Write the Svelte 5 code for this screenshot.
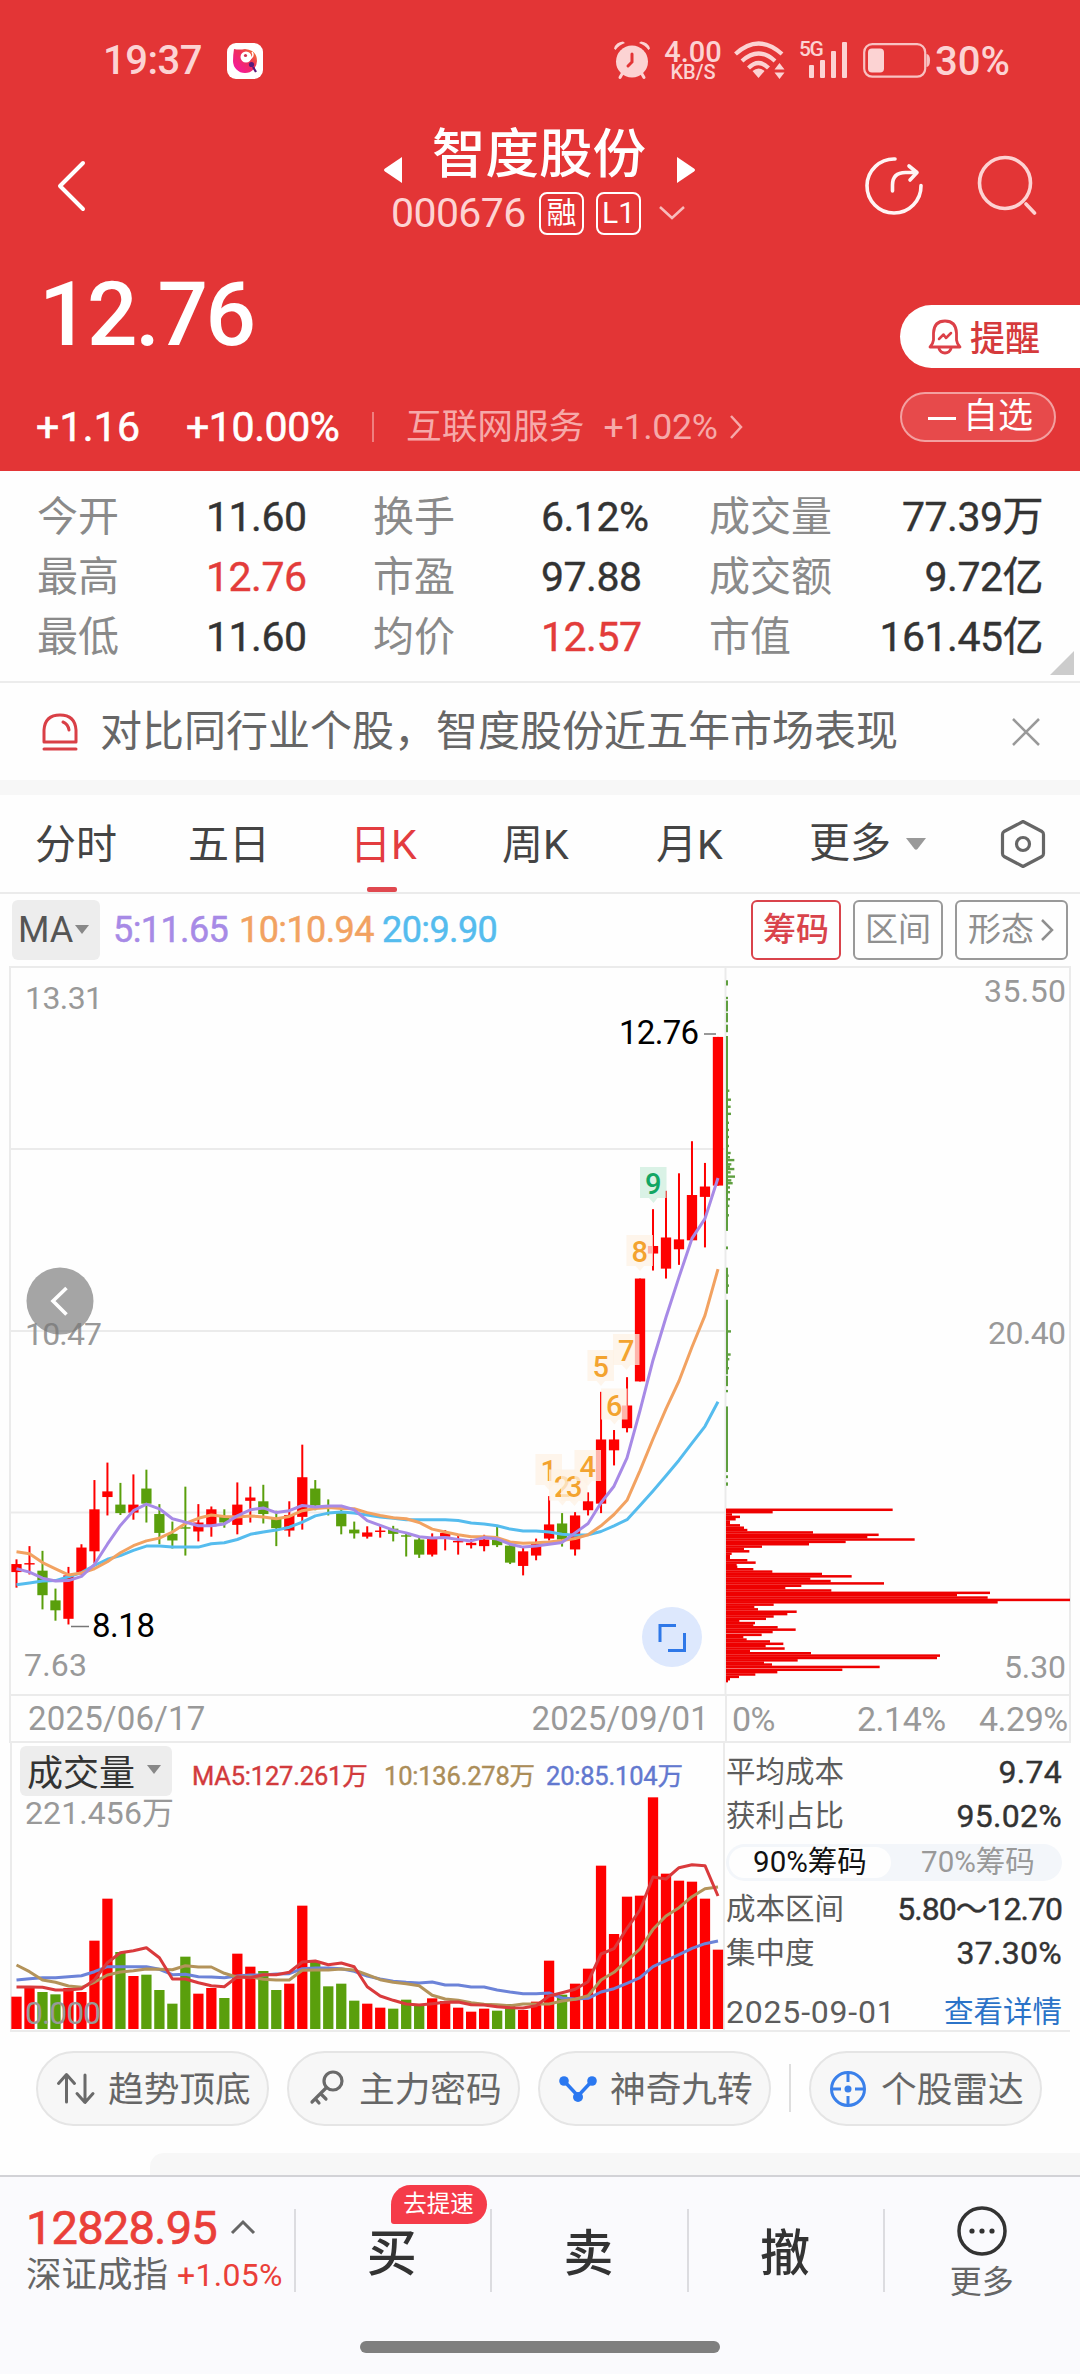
<script>
    const left = 16.5;
    const step = 12.99;
    const barWidth = 10.3;
    const xAt = (i) => left + i * step;
    const ky = (v) => v / 2.119 - 6;
    const vy = (v) => v / 3 - 62;

    // direction, high, body top, body bottom, low
    const candles = [
        ["r", 1270, 1280, 1297, 1330], ["r", 1242, 1278, 1281, 1302], ["g", 1252, 1294, 1346, 1376],
        ["g", 1332, 1357, 1378, 1400], ["r", 1286, 1304, 1396, 1408], ["r", 1238, 1245, 1298, 1303],
        ["r", 1102, 1164, 1253, 1278], ["r", 1065, 1126, 1138, 1177], ["g", 1108, 1154, 1172, 1176],
        ["r", 1090, 1154, 1171, 1186], ["g", 1080, 1120, 1152, 1192], ["g", 1153, 1174, 1214, 1238],
        ["g", 1190, 1216, 1230, 1247], ["g", 1116, 1202, 1205, 1262], ["r", 1153, 1192, 1211, 1232],
        ["r", 1158, 1164, 1200, 1222], ["g", 1164, 1178, 1192, 1203], ["r", 1107, 1154, 1197, 1217],
        ["r", 1116, 1139, 1146, 1192], ["g", 1112, 1147, 1174, 1194], ["g", 1167, 1183, 1204, 1242],
        ["r", 1147, 1176, 1209, 1222], ["r", 1027, 1096, 1180, 1207], ["g", 1102, 1120, 1156, 1166],
        ["g", 1143, 1158, 1161, 1177], ["g", 1164, 1168, 1200, 1217], ["g", 1190, 1207, 1215, 1226],
        ["r", 1200, 1213, 1222, 1226], ["r", 1198, 1209, 1212, 1224], ["g", 1199, 1205, 1216, 1232],
        ["g", 1216, 1219, 1222, 1264], ["g", 1222, 1228, 1260, 1267], ["r", 1215, 1227, 1260, 1264],
        ["r", 1208, 1214, 1222, 1251], ["r", 1220, 1231, 1234, 1260], ["r", 1227, 1235, 1240, 1247],
        ["r", 1218, 1228, 1242, 1253], ["g", 1199, 1228, 1240, 1244], ["g", 1238, 1241, 1277, 1280],
        ["r", 1245, 1253, 1284, 1304], ["r", 1226, 1235, 1262, 1272], ["r", 1136, 1196, 1226, 1230],
        ["g", 1172, 1194, 1228, 1243], ["r", 1170, 1177, 1249, 1262], ["r", 1128, 1147, 1166, 1177],
        ["r", 915, 1016, 1152, 1172], ["r", 996, 1016, 1039, 1071], ["r", 884, 944, 992, 1001],
        ["r", 675, 675, 893, 893], ["r", 528, 606, 622, 658], ["r", 489, 588, 654, 675],
        ["r", 452, 592, 613, 646], ["r", 384, 498, 594, 594], ["r", 430, 480, 502, 609],
        ["r", 163, 163, 478, 478],
    ];
    const priceMa = [
        { color: "#55bcee", v: [1324, 1320, 1316, 1315, 1307, 1298, 1283, 1270, 1262, 1251, 1242, 1242, 1244, 1244, 1244, 1237, 1235, 1228, 1217, 1212, 1208, 1202, 1191, 1178, 1172, 1170, 1172, 1176, 1180, 1183, 1186, 1186, 1186, 1186, 1188, 1193, 1195, 1199, 1206, 1210, 1210, 1212, 1217, 1219, 1218, 1211, 1199, 1186, 1156, 1125, 1093, 1060, 1024, 988, 936] },
        { color: "#f2a261", v: [1254, 1258, 1277, 1290, 1303, 1299, 1290, 1275, 1256, 1241, 1231, 1225, 1212, 1194, 1183, 1176, 1179, 1180, 1178, 1180, 1184, 1179, 1167, 1162, 1160, 1162, 1163, 1171, 1177, 1182, 1184, 1192, 1206, 1212, 1218, 1222, 1222, 1224, 1233, 1236, 1235, 1233, 1230, 1226, 1218, 1199, 1175, 1145, 1082, 1015, 951, 892, 820, 753, 655] },
        { color: "#a78ae6", v: [1290, 1297, 1310, 1316, 1315, 1306, 1281, 1238, 1198, 1167, 1153, 1163, 1184, 1191, 1199, 1199, 1195, 1178, 1165, 1161, 1171, 1167, 1156, 1159, 1157, 1157, 1165, 1188, 1198, 1208, 1214, 1222, 1225, 1224, 1228, 1231, 1224, 1227, 1238, 1244, 1242, 1238, 1234, 1214, 1194, 1150, 1115, 1055, 955, 848, 757, 672, 590, 548, 462] },
    ];
    const volumes = [
        950, 918, 936, 943, 924, 936, 782, 656, 816, 888, 884, 930, 971, 830, 941, 924, 954, 821, 860,
        873, 930, 911, 677, 845, 919, 911, 962, 971, 983, 986, 959, 978, 955, 963, 983, 995, 986, 992,
        972, 990, 965, 842, 944, 911, 866, 557, 762, 650, 647, 352, 581, 602, 605, 656, 809,
    ];
    const volumeMa = [
        { color: "#6c83d8", v: [900, 896, 893, 893, 890, 887, 875, 860, 860, 860, 860, 868, 884, 883, 890, 891, 893, 888, 885, 885, 882, 881, 866, 864, 864, 866, 874, 888, 897, 904, 907, 909, 906, 915, 915, 921, 921, 930, 936, 941, 941, 939, 954, 957, 955, 936, 926, 910, 893, 860, 842, 824, 805, 791, 783] },
        { color: "#b3935a", v: [855, 875, 900, 907, 918, 922, 907, 885, 876, 872, 867, 868, 869, 857, 861, 861, 880, 892, 890, 898, 900, 900, 871, 870, 870, 867, 870, 884, 899, 907, 911, 917, 946, 957, 961, 968, 973, 974, 977, 972, 972, 972, 963, 958, 947, 900, 877, 842, 807, 748, 708, 683, 650, 626, 621] },
        { color: "#d93a3c", v: [921, 921, 922, 930, 930, 926, 900, 848, 818, 812, 803, 833, 897, 897, 908, 917, 920, 890, 893, 884, 884, 877, 846, 843, 854, 849, 860, 920, 948, 961, 972, 975, 971, 967, 966, 974, 975, 980, 983, 984, 977, 948, 938, 928, 905, 822, 806, 745, 690, 591, 597, 563, 554, 557, 648] },
    ];
    const line = (v, fy) => v.map((p, i) => `${xAt(i).toFixed(1)},${fy(p).toFixed(1)}`).join(" ");
    const fill = (d) => (d === "r" ? "#fe0000" : "#5a9f0c");

    // chip distribution: level, length
    const redChips = [
        [1165, 548], [1170, 188], [1175, 66], [1180, 90], [1185, 77], [1190, 60], [1194, 60], [1198, 90], [1203, 102],
        [1208, 112], [1213, 309], [1218, 506], [1223, 472], [1228, 614], [1233, 407], [1238, 297],
        [1243, 156], [1248, 102], [1253, 118], [1258, 65], [1263, 60], [1267, 60], [1272, 112], [1277, 137],
        [1282, 80], [1286, 82], [1291, 130], [1296, 187], [1301, 336], [1306, 425], [1311, 301], [1316, 362],
        [1321, 522], [1326, 274], [1331, 226], [1336, 364], [1341, 840], [1346, 741], [1351, 833],
        [1356, 1080], [1361, 863], [1366, 191], [1371, 133], [1376, 144], [1381, 260], [1386, 232],
        [1391, 191], [1396, 168], [1400, 88], [1405, 135], [1410, 130], [1414, 203], [1419, 257],
        [1424, 188], [1430, 155], [1435, 100], [1440, 110], [1444, 180], [1449, 220], [1454, 167],
        [1459, 224], [1464, 120], [1469, 303], [1474, 690], [1479, 681], [1484, 263], [1489, 162],
        [1493, 186], [1498, 509], [1504, 397], [1509, 202], [1514, 136], [1519, 87], [1524, 60], [1528, 54],
    ];
    const greenSpine = [
        [43, 54], [78, 83], [86, 109], [112, 132], [137, 153], [161, 574], [607, 613], [652, 707],
        [720, 878], [881, 903], [911, 916], [946, 1085], [1092, 1098], [1107, 1114],
    ];
    const greenChips = [
        [277, 58], [296, 63], [311, 62], [326, 63], [345, 57], [360, 57], [375, 57], [394, 57],
        [409, 62], [418, 60], [424, 73], [433, 64], [438, 60], [443, 73], [450, 62], [459, 75], [467, 64],
        [473, 68], [482, 60], [492, 60], [507, 60], [521, 58], [541, 57], [669, 56], [690, 57],
        [787, 63], [836, 62], [846, 58], [865, 57],
    ];
    const nineTurns = [
        [1, 535.5, 488], [2, 549, 503.5], [3, 561, 504], [4, 574.5, 484], [5, 587.5, 384],
        [6, 601, 422.5], [7, 613, 368], [8, 626.5, 269], [9, 640, 201],
    ];

    const stats = [
        ["今开", "11.60", "", "换手", "6.12%", "", "成交量", "77.39万"],
        ["最高", "12.76", "up", "市盈", "97.88", "", "成交额", "9.72亿"],
        ["最低", "11.60", "", "均价", "12.57", "up", "市值", "161.45亿"],
    ];
    const tabs = ["分时", "五日", "日K", "周K", "月K"];
    let activeTab = "日K";
    let chipRange = 90;
</script>

<main>
    <header>
        <div class="status">
            <span class="clock">19:37</span>
            <svg class="app" width="36" height="36" viewBox="0 0 36 36">
                <defs>
                    <linearGradient id="bird" x1="0" y1="1" x2="1" y2="0">
                        <stop offset="0" stop-color="#f712b0" /><stop offset=".6" stop-color="#ef3055" /><stop offset="1" stop-color="#f08a2c" />
                    </linearGradient>
                </defs>
                <rect width="36" height="36" rx="9" fill="#fff" />
                <path d="M7 6q5 1 11 0 12 1 12 12a12 12 0 0 1-24 0Q6 12 7 6z" fill="url(#bird)" />
                <circle cx="19" cy="14" r="5.500" fill="#fff" />
                <circle cx="18.500" cy="12.500" r="1.600" fill="#d03050" />
                <path d="M25 9q3 4-3 8" fill="none" stroke="#fff" stroke-width="1.500" />
                <circle cx="24.500" cy="21.500" r="2.600" fill="#55187a" />
                <path d="M26 24l3 5" stroke="#55187a" stroke-width="2.200" />
            </svg>
            <div class="sys">
                <svg class="alarm" width="38" height="40" viewBox="0 0 38 40" fill="none" stroke="#fcd3d3" stroke-linecap="round">
                    <circle cx="19" cy="21.500" r="16" fill="#fcd3d3" stroke="none" />
                    <path d="M1 8.500Q3 2 10 1.500L12 3Q6 5 2.500 10zM37 8.500Q35 2 28 1.500L26 3Q32 5 35.500 10z" fill="#fcd3d3" stroke="none" />
                    <path d="M9 34l-2 3.500M29 34l2 3.500" stroke-width="3" />
                    <path d="M19 14v8l-4 4" stroke="#e33536" stroke-width="3" />
                </svg>
                <div class="speed"><b>4.00</b><i>KB/S</i></div>
                <svg class="wifi" width="51" height="38" viewBox="0 0 51 38" fill="none" stroke="#fcd3d3" stroke-width="4.200">
                    <path d="M1.500 13Q24.500 -8 48 13M8 20Q24.500 5 41 20M14.500 27Q24.500 17 34.500 27" />
                    <path d="M18.500 30Q24.500 25 30.500 30L24.500 37z" fill="#fcd3d3" stroke="none" />
                    <path d="M45.500 22l5 6.500h-10zM45.500 38l5-6.500h-10z" fill="#fcd3d3" stroke="none" />
                </svg>
                <div class="signal">
                    <b>5G</b>
                    <svg width="40" height="38" viewBox="0 0 40 38" fill="#fcd3d3">
                        <rect x="0" y="24" width="5" height="13" rx="1" /><rect x="11" y="19" width="5" height="18" rx="1" />
                        <rect x="22" y="10" width="5" height="27" rx="1" /><rect x="33" y="1" width="5" height="36" rx="1" />
                    </svg>
                </div>
                <svg class="battery" width="67" height="35" viewBox="0 0 67 35">
                    <rect x="1.200" y="1.200" width="61" height="32.500" rx="8" fill="none" stroke="#f8c2c2" stroke-width="2.200" />
                    <rect x="5" y="5.500" width="16" height="24" rx="4" fill="#fcd3d3" />
                    <path d="M63.500 11q3.500 0 3.500 6.500t-3.500 6.500z" fill="#f8c2c2" />
                </svg>
                <span class="percent">30%</span>
            </div>
        </div>

        <nav>
            <svg class="back" width="32" height="52" viewBox="0 0 32 52" fill="none" stroke="#fff" stroke-width="4" stroke-linecap="round" stroke-linejoin="round"><path d="M28 3L5 26l23 23" /></svg>
            <div class="title">
                <div class="name">
                    <svg width="20" height="28" viewBox="0 0 20 28"><path d="M19 1v26L2 15.500Q0 14 2 12.500z" fill="#fff" /></svg>
                    <h1>智度股份</h1>
                    <svg width="20" height="28" viewBox="0 0 20 28"><path d="M1 1v26l17-11.500q2-1.500 0-3z" fill="#fff" /></svg>
                </div>
                <div class="code">
                    <span>000676</span>
                    <em class="zh">融</em>
                    <em>L1</em>
                    <svg width="28" height="16" viewBox="0 0 28 16" fill="none" stroke="#f8bcbc" stroke-width="2.500"><path d="M2 2l12 11L26 2" /></svg>
                </div>
            </div>
            <svg class="share" width="64" height="64" viewBox="0 0 64 64" fill="none" stroke="#fff4f4" stroke-width="3.600" stroke-linecap="round" stroke-linejoin="round">
                <path d="M33 5A27 27 0 1 0 59 31.500" />
                <path d="M30.500 37v-6q0-12.500 13-12.500h11M47 12l8 6.500-7 7.500" />
            </svg>
            <svg class="search" width="62" height="62" viewBox="0 0 62 62" fill="none" stroke="#fdd2d2" stroke-width="3.600" stroke-linecap="round">
                <circle cx="30" cy="28" r="25.500" /><path d="M51 49l8.500 9" />
            </svg>
        </nav>

        <div class="quote">
            <div class="quote-left">
                <div class="price">12.76</div>
                <div class="change">
                    <span class="diff">+1.16</span>
                    <span class="rate">+10.00%</span>
                    <span class="bar"></span>
                    <span class="industry">互联网服务</span>
                    <span class="ind-rate">+1.02%</span>
                    <svg width="16" height="26" viewBox="0 0 16 26" fill="none" stroke="#f6a9a9" stroke-width="2.500"><path d="M3 2l10 11L3 24" /></svg>
                </div>
            </div>
            <div class="quote-right">
                <button class="remind">
                    <svg width="34" height="36" viewBox="0 0 34 36" fill="none" stroke="#dc4048" stroke-width="2.800" stroke-linecap="round" stroke-linejoin="round">
                        <path d="M5.500 21V14Q6 2 17 2t11.500 12v7q.5 4 3.500 7H2q3-3 3.500-7z" /><path d="M11 29.500q1.500 4.500 6 4.500t6-4.500" />
                        <path d="M11 20l4.500-4.500 2.500 3.500 5-5" stroke-width="2.500" />
                    </svg>
                    提醒
                </button>
                <button class="fav"><i></i>自选</button>
            </div>
        </div>
    </header>

    <section class="stats">
        {#each stats as s}
            <div class="stat-row">
                <span class="label">{s[0]}</span><span class="val {s[2]}">{s[1]}</span>
                <span class="label">{s[3]}</span><span class="val {s[5]}">{s[4]}</span>
                <span class="label">{s[6]}</span><span class="val end">{s[7]}</span>
            </div>
        {/each}
        <svg class="corner" width="24" height="24" viewBox="0 0 24 24"><path d="M24 0v24H0z" fill="#ccc" /></svg>
    </section>

    <section class="notice">
        <svg width="36" height="38" viewBox="0 0 36 38" fill="none" stroke="#d93f46" stroke-width="3" stroke-linecap="round">
            <path d="M2 29V17Q3 2 18 2t16 15v12zM2 36h32" stroke-linejoin="round" /><path d="M21 9q5 2 6 8" />
        </svg>
        <p>对比同行业个股，智度股份近五年市场表现</p>
        <svg width="28" height="28" viewBox="0 0 28 28" stroke="#999" stroke-width="2.500"><path d="M1 1l26 26M27 1L1 27" /></svg>
    </section>

    <div class="tabs">
        {#each tabs as t}
            <button class="tab" class:active={t === activeTab} on:click={() => (activeTab = t)}>{t}</button>
        {/each}
        <button class="tab more">更多<svg width="22" height="14" viewBox="0 0 22 14"><path d="M1 1h20L12.500 12q-1.500 1.500-3 0z" fill="#999" /></svg></button>
        <svg class="gear" width="46" height="50" viewBox="0 0 46 50" fill="none" stroke="#666" stroke-width="3.200" stroke-linejoin="round">
            <path d="M23 2.500L42 12.500Q43.500 13.500 43.500 15.500V34.500Q43.500 36.500 42 37.500L23 47.500 4 37.500Q2.500 36.500 2.500 34.500V15.500Q2.500 13.500 4 12.500z" />
            <circle cx="23" cy="25" r="6.500" />
        </svg>
    </div>

    <div class="ma">
        <button class="ma-pick">MA<svg width="14" height="10" viewBox="0 0 14 10"><path d="M0 0h14L7 9z" fill="#888" /></svg></button>
        <span class="m5">5:11.65</span>
        <span class="m10">10:10.94</span>
        <span class="m20">20:9.90</span>
        <div class="tools">
            <button class="on">筹码</button>
            <button>区间</button>
            <button class="shape">形态<svg width="15" height="24" viewBox="0 0 15 24" fill="none" stroke="#8f8f8f" stroke-width="2.500"><path d="M2 2l10 10L2 22" /></svg></button>
        </div>
    </div>

    <svg class="kline" width="1080" height="728" viewBox="0 0 1080 728">
        <g stroke="#ebebeb" stroke-width="2" fill="none">
            <path d="M10 1H1070V728M10 0V728M725.500 0V728" />
            <path d="M10 183H725M10 365H725M10 546.500H725" />
        </g>
        <g class="axis">
            <text x="25" y="42.500" textLength="78">13.31</text>
            <text x="25" y="379" textLength="77">10.47</text>
            <text x="24" y="710" textLength="63">7.63</text>
            <text x="984" y="36" textLength="82">35.50</text>
            <text x="988" y="378" textLength="78">20.40</text>
            <text x="1004" y="712" textLength="62">5.30</text>
        </g>
        {#each candles as c, i}
            <rect x={xAt(i) - 1} y={ky(c[1])} width="2" height={ky(c[4]) - ky(c[1])} fill={fill(c[0])} />
            <rect x={xAt(i) - barWidth / 2} y={ky(c[2])} width={barWidth} height={ky(c[3]) - ky(c[2])} fill={fill(c[0])} />
        {/each}
        {#each nineTurns as n}
            <g class="turn" class:last={n[0] === 9}>
                <path d="M{n[1]} {n[2]}h26.500v31h-9l-4 5-4.500-5h-9z" />
                <text x={n[1] + 13.2} y={n[2] + 27} text-anchor="middle">{n[0]}</text>
            </g>
        {/each}
        {#each priceMa as m}
            <polyline points={line(m.v, ky)} fill="none" stroke={m.color} stroke-width="3" stroke-linejoin="round" />
        {/each}
        {#each greenSpine as g}
            <rect x="726" y={ky(g[0])} width="2" height={ky(g[1]) - ky(g[0])} fill="#5f9f3f" />
        {/each}
        {#each greenChips as g}
            <rect x="726" y={ky(g[0]) - 1.2} width={(g[1] - 48) / 3} height="2.400" fill="#5f9f3f" />
        {/each}
        {#each redChips as r}
            <rect x="726" y={ky(r[0]) - 1.25} width={(r[1] - 48) / 3} height="2.500" fill="#ee0000" />
        {/each}
        <path d="M704 68h12M71 660.500h18" stroke="#777" stroke-width="1.500" />
        <g class="mark">
            <text x="619" y="78" textLength="80">12.76</text>
            <text x="92" y="671" textLength="63">8.18</text>
        </g>
        <circle cx="60" cy="335" r="33.500" fill="#777" fill-opacity=".66" />
        <path d="M66.500 322L53 335l13.500 13.500" fill="none" stroke="#fff" stroke-width="3.600" />
        <circle cx="672" cy="671" r="30" fill="#dde8fd" />
        <path d="M660 676V659.500H676M668 684.500H684.500V667" fill="none" stroke="#2f78e8" stroke-width="3" />
    </svg>

    <div class="dates">
        <div class="days"><span>2025/06/17</span><span>2025/09/01</span></div>
        <div class="ratios"><span>0%</span><span>2.14%</span><span>4.29%</span></div>
    </div>

    <div class="lower">
        <div class="volume">
            <div class="vol-head">
                <button>成交量<svg width="14" height="9" viewBox="0 0 14 9"><path d="M0 0h14L7 9z" fill="#888" /></svg></button>
                <span class="v5">MA5:127.261万</span>
                <span class="v10">10:136.278万</span>
                <span class="v20">20:85.104万</span>
            </div>
            <svg class="vol" width="715" height="290" viewBox="10 0 715 290">
                {#each volumes as v, i}
                    <rect x={xAt(i) - barWidth / 2} y={vy(v)} width={barWidth} height={287 - vy(v)} fill={fill(candles[i][0])} />
                {/each}
                {#each volumeMa as m}
                    <polyline points={line(m.v, vy)} fill="none" stroke={m.color} stroke-width="3" stroke-linejoin="round" />
                {/each}
                <g class="axis">
                    <text x="25" y="82" textLength="149">221.456万</text>
                    <text x="25" y="282" textLength="76">0.000</text>
                </g>
            </svg>
        </div>
        <div class="chips">
            <div class="chip-row"><span>平均成本</span><b>9.74</b></div>
            <div class="chip-row"><span>获利占比</span><b>95.02%</b></div>
            <div class="toggle">
                <button class:sel={chipRange === 90} on:click={() => (chipRange = 90)}>90%筹码</button>
                <button class:sel={chipRange === 70} on:click={() => (chipRange = 70)}>70%筹码</button>
            </div>
            <div class="chip-row"><span>成本区间</span><b class="range">5.80～12.70</b></div>
            <div class="chip-row"><span>集中度</span><b>37.30%</b></div>
            <div class="chip-row foot"><span>2025-09-01</span><a href="#detail">查看详情</a></div>
        </div>
    </div>

    <div class="pills">
        <button>
            <svg width="40" height="38" viewBox="0 0 40 38" fill="none" stroke="#6a6a6a" stroke-width="3" stroke-linecap="round" stroke-linejoin="round"><path d="M10.500 32V5M2.500 13.500l8-9 8 9M29 5v27M37 23.500l-8 9-8-9" /></svg>
            趋势顶底
        </button>
        <button>
            <svg width="40" height="38" viewBox="0 0 40 38" fill="none" stroke="#6a6a6a" stroke-width="3.200" stroke-linecap="round"><circle cx="26" cy="11" r="9" /><path d="M19.500 17.500L5 32M14 24l5 5M8.500 29l3.500 4" /></svg>
            主力密码
        </button>
        <button>
            <svg width="40" height="38" viewBox="0 0 40 38" fill="#2b78f0"><path d="M6 11L20 26 34 11" fill="none" stroke="#2b78f0" stroke-width="3.500" /><circle cx="6" cy="11" r="4.800" /><circle cx="34" cy="11" r="4.800" /><circle cx="20" cy="27" r="5" /></svg>
            神奇九转
        </button>
        <span class="sep"></span>
        <button>
            <svg width="40" height="38" viewBox="0 0 40 38" fill="none" stroke="#3a80ea" stroke-width="3"><circle cx="19" cy="19" r="16.500" /><path d="M19 2v10M19 26v10M2 19h10M26 19h10" /><circle cx="19" cy="19" r="3.500" fill="#3a80ea" stroke="none" /></svg>
            个股雷达
        </button>
    </div>
    <div class="sheet"></div>

    <footer>
        <div class="actions">
            <div class="index">
                <div class="point">12828.95<svg width="26" height="16" viewBox="0 0 26 16" fill="none" stroke="#666" stroke-width="3"><path d="M2 14L13 3l11 11" /></svg></div>
                <div class="idx-name">深证成指<b>+1.05%</b></div>
            </div>
            <button class="act">买<span class="tip">去提速</span></button>
            <button class="act">卖</button>
            <button class="act">撤</button>
            <button class="act menu">
                <svg width="52" height="52" viewBox="0 0 52 52"><circle cx="26" cy="26" r="23" fill="none" stroke="#333" stroke-width="3.500" /><circle cx="16" cy="26" r="2.600" fill="#333" /><circle cx="26" cy="26" r="2.600" fill="#333" /><circle cx="36" cy="26" r="2.600" fill="#333" /></svg>
                更多
            </button>
        </div>
        <div class="home"></div>
    </footer>
</main>

<style>
    :global(body) {
        background: #fefefe;
    }
    main {
        width: 1080px;
        height: 2374px;
        display: flex;
        flex-direction: column;
        overflow: hidden;
        font-family: Roboto, "Noto Sans CJK SC", sans-serif;
        color: #333;
    }
    main > * {
        flex: none;
        box-sizing: border-box;
    }
    button {
        font: inherit;
        color: inherit;
        background: none;
        border: 0;
        padding: 0;
        margin: 0;
    }
    svg {
        display: block;
        flex: none;
    }
    b, i, em {
        font-weight: inherit;
        font-style: normal;
    }
    span, b {
        white-space: nowrap;
    }

    /* header */
    header {
        height: 471px;
        background: #e33536;
        color: #fff;
    }
    .status {
        height: 120px;
        display: flex;
        align-items: center;
        padding-left: 103px;
        color: #fcd3d3;
    }
    .clock {
        width: 124px;
        font-size: 40px;
        font-weight: 500;
        letter-spacing: -0.5px;
    }
    .app {
        margin-top: 2px;
    }
    .sys {
        display: flex;
        align-items: center;
        margin-left: 350px;
    }
    .speed {
        width: 60px;
        margin: 0 11px 0 12px;
        display: flex;
        flex-direction: column;
        align-items: center;
        font-weight: 500;
    }
    .speed b {
        font-size: 29px;
        line-height: 23px;
    }
    .speed i {
        font-size: 20px;
        line-height: 16px;
    }
    .signal {
        position: relative;
        margin: 0 14px 0 24px;
    }
    .signal b {
        position: absolute;
        left: -10px;
        top: -2px;
        font-size: 21px;
        line-height: 20px;
        font-weight: 500;
        letter-spacing: -1.500px;
    }
    .percent {
        margin: 2px 0 0 5px;
        font-size: 40px;
        font-weight: 500;
    }
    nav {
        height: 130px;
        display: flex;
        align-items: flex-start;
    }
    .back {
        margin: 40px 0 0 55px;
    }
    .title {
        width: 320px;
        margin-left: 293px;
    }
    .name {
        display: flex;
        align-items: center;
        margin: 2px 0 4px 3px;
    }
    h1 {
        margin: 0 30px 0 29px;
        width: 214px;
        font-size: 53.500px;
        line-height: 66px;
        font-weight: 500;
        white-space: nowrap;
    }
    .name svg {
        margin-top: 30px;
    }
    .code {
        display: flex;
        align-items: center;
        margin-left: 11px;
        height: 42px;
        color: #fdd3d3;
    }
    .code span {
        width: 148px;
        font-size: 41px;
        letter-spacing: -0.6px;
    }
    .code em {
        box-sizing: border-box;
        width: 45px;
        height: 43px;
        margin-right: 12px;
        border: 2.500px solid #fff;
        border-radius: 8px;
        color: #fff;
        font-size: 30px;
        line-height: 37px;
        text-align: center;
    }
    .code em + svg {
        margin-left: 5px;
    }
    .share {
        margin: 34px 0 0 162px;
    }
    .search {
        margin: 35px 0 0 49px;
    }
    .quote {
        display: flex;
        justify-content: space-between;
    }
    .price {
        height: 126px;
        padding-left: 39px;
        font-size: 89px;
        line-height: 129px;
        font-weight: 500;
        letter-spacing: -2.500px;
    }
    .change {
        display: flex;
        align-items: center;
        height: 50px;
        margin-top: 26px;
        padding-left: 36px;
        font-size: 41px;
        line-height: 50px;
        font-weight: 400;
    }
    .diff {
        width: 150px;
        letter-spacing: 0.2px;
    }
    .rate {
        width: 186px;
        letter-spacing: -0.4px;
    }
    .diff, .rate {
        -webkit-text-stroke: 0.6px #fff;
    }
    .bar {
        width: 2px;
        height: 30px;
        margin-right: 32px;
        background: #ef7f7f;
    }
    .industry, .ind-rate {
        color: #f6a9a9;
        font-size: 35.700px;
    }
    .ind-rate {
        width: 125px;
        margin-left: 19px;
        letter-spacing: -0.3px;
    }
    .quote-right {
        width: 180px;
        padding-top: 55px;
    }
    .remind {
        display: flex;
        align-items: center;
        justify-content: flex-start;
        width: 180px;
        height: 63px;
        padding: 0 0 3px 28px;
        gap: 8px;
        background: #fff;
        border-radius: 32px 0 0 32px;
        color: #d53a3c;
        font-size: 35px;
        font-weight: 500;
    }
    .remind svg {
        margin-top: 3px;
    }
    .fav {
        box-sizing: border-box;
        display: flex;
        align-items: center;
        width: 156px;
        height: 50px;
        margin-top: 24px;
        padding-left: 26px;
        border: 2px solid #f3a0a0;
        border-radius: 25px;
        background: #e74a4b;
        font-size: 35px;
        line-height: 46px;
    }
    .fav i {
        width: 28px;
        height: 3px;
        margin: 2px 7px 0 0;
        background: #fff;
    }

    /* stats */
    .stats {
        position: relative;
        height: 212px;
        padding: 16px 37px 0 37px;
        border-bottom: 2px solid #ececec;
        font-size: 41px;
    }
    .stat-row {
        display: grid;
        grid-template-columns: 169px 167px 168px 168px 150px 1fr;
        line-height: 60px;
    }
    .label {
        color: #8a8a8a;
    }
    .val {
        letter-spacing: -0.5px;
        -webkit-text-stroke: 0.4px currentColor;
    }
    .val.end {
        text-align: right;
    }
    .up {
        color: #e33c3a;
    }
    .corner {
        position: absolute;
        right: 6px;
        bottom: 6px;
    }
    .notice {
        height: 112px;
        display: flex;
        align-items: center;
        padding: 0 40px 0 42px;
        border-bottom: 15px solid #f7f7f7;
        color: #666;
    }
    .notice p {
        flex: 1;
        margin: 0 0 0 22px;
        font-size: 42px;
        line-height: 60px;
    }

    /* tabs */
    .tabs {
        height: 99px;
        display: flex;
        align-items: center;
        padding-left: 35px;
        border-bottom: 2px solid #ebebeb;
        color: #444;
        font-size: 41px;
    }
    .tab {
        position: relative;
        width: 153px;
        height: 97px;
        text-align: left;
        line-height: 101px;
    }
    .tab:nth-child(3) {
        width: 161px;
        padding-left: 9px;
        box-sizing: border-box;
    }
    .tab:nth-child(4) {
        width: 154px;
    }
    .active {
        color: #e33c40;
    }
    .active::after {
        content: "";
        position: absolute;
        left: 26px;
        bottom: 0;
        width: 30px;
        height: 5px;
        border-radius: 2px;
        background: #e0484f;
    }
    .more {
        display: flex;
        align-items: center;
        width: 191px;
        gap: 14px;
    }
    .ma {
        height: 72px;
        display: flex;
        align-items: center;
        padding: 0 12px 0 12px;
        font-size: 36px;
        letter-spacing: -0.6px;
    }
    .ma-pick {
        display: flex;
        align-items: center;
        gap: 2px;
        box-sizing: border-box;
        width: 88px;
        height: 60px;
        padding-left: 6px;
        margin-right: 13px;
        border-radius: 6px;
        background: #ededed;
        color: #555;
    }
    .m5 {
        width: 126px;
        color: #a78ae6;
    }
    .m10 {
        width: 143px;
        color: #f2a261;
    }
    .m20 {
        color: #55bcee;
    }
    .m5, .m10, .m20 {
        -webkit-text-stroke: 0.5px currentColor;
    }
    .tools {
        display: flex;
        gap: 12px;
        margin-left: auto;
    }
    .tools button {
        box-sizing: border-box;
        width: 90px;
        height: 60px;
        border: 2px solid #999;
        border-radius: 6px;
        color: #8f8f8f;
        font-size: 33px;
        line-height: 54px;
        letter-spacing: 0;
    }
    .tools .on {
        border-color: #d9434b;
        color: #d9434b;
        font-weight: 500;
    }
    .tools .shape {
        display: flex;
        align-items: center;
        justify-content: center;
        gap: 6px;
        width: 113px;
    }

    /* charts */
    .axis text {
        fill: #999;
        font-size: 32px;
    }
    .mark text {
        fill: #000;
        font-size: 33px;
    }
    .turn path {
        fill: #fdf2e4;
        fill-opacity: 0.75;
    }
    .turn text {
        fill: #f3a32f;
        font-size: 29px;
        font-weight: 500;
    }
    .turn.last path {
        fill: #cdeedd;
    }
    .turn.last text {
        fill: #12a663;
    }
    .dates {
        height: 49px;
        display: flex;
        margin: 0 9px;
        color: #999;
        font-size: 33px;
        line-height: 46px;
        border: 2px solid #ebebeb;
    }
    .days {
        box-sizing: border-box;
        width: 716px;
        display: flex;
        justify-content: space-between;
        padding: 0 16px 0 17px;
        border-right: 2px solid #ebebeb;
        letter-spacing: 0.2px;
    }
    .ratios {
        flex: 1;
        display: flex;
        padding-left: 5px;
        letter-spacing: -0.5px;
        font-size: 34px;
    }
    .ratios span:nth-child(1) {
        width: 125px;
    }
    .ratios span:nth-child(2) {
        width: 122px;
    }
    .lower {
        height: 290px;
        display: flex;
        margin: -1px 10px 0;
        border-bottom: 2px solid #ebebeb;
    }
    .volume {
        box-sizing: border-box;
        position: relative;
        width: 716px;
        border-left: 2px solid #ebebeb;
        border-right: 2px solid #ebebeb;
    }
    .vol {
        position: absolute;
        left: -2px;
        top: 0;
    }
    .vol-head {
        display: flex;
        align-items: center;
        padding: 4px 0 0 8px;
        font-size: 25.500px;
    }
    .vol-head button {
        display: flex;
        align-items: center;
        gap: 12px;
        box-sizing: border-box;
        width: 152px;
        height: 50px;
        margin-right: 20px;
        padding: 0 0 3px 7px;
        border-radius: 6px;
        background: #ededed;
        font-size: 36px;
    }
    .vol-head span {
        margin-top: 5px;
        letter-spacing: -0.2px;
    }
    .v5 {
        width: 192px;
        color: #d23a3c;
    }
    .v10 {
        width: 162px;
        color: #ab8d58;
    }
    .v20 {
        color: #6278cf;
    }
    .v5, .v10, .v20 {
        -webkit-text-stroke: 0.4px currentColor;
    }
    .chips {
        flex: 1;
        padding: 9px 8px 0 1px;
        font-size: 29.500px;
        line-height: 43.500px;
    }
    .chip-row {
        display: flex;
        justify-content: space-between;
        color: #5c5c5c;
    }
    .chip-row b {
        color: #333;
        font-size: 32px;
        letter-spacing: 0.3px;
        -webkit-text-stroke: 0.4px currentColor;
    }
    .chip-row .range {
        letter-spacing: -1px;
    }
    .toggle {
        display: flex;
        height: 37px;
        margin: 6px 0 7px;
        border-radius: 19px;
        background: #f3f6fa;
        color: #999;
    }
    .toggle button {
        width: 162px;
        height: 31px;
        margin: 3px;
        line-height: 31px;
        border-radius: 16px;
    }
    .toggle .sel {
        background: #fefefe;
        color: #111;
    }
    .foot {
        margin-top: 16px;
    }
    .foot span {
        font-size: 32px;
        letter-spacing: 0.8px;
    }
    .foot a {
        color: #2b73c8;
        text-decoration: none;
    }

    /* shortcuts */
    .pills {
        height: 121px;
        display: flex;
        align-items: flex-start;
        padding: 19px 0 0 36px;
    }
    .pills button {
        box-sizing: border-box;
        display: flex;
        flex: none;
        align-items: center;
        width: 233px;
        height: 75px;
        margin-right: 18px;
        padding: 0 0 5px 18px;
        gap: 12px;
        border: 2px solid #e5e5e5;
        border-radius: 38px;
        background: #f7f7f7;
        color: #666;
        font-size: 35.700px;
        white-space: nowrap;
    }
    .pills button svg {
        margin-top: 5px;
    }
    .sep {
        width: 2px;
        height: 48px;
        margin: 13px 18px 0 0;
        background: #dedede;
    }
    .sheet {
        height: 22px;
        margin-left: 150px;
        border-radius: 14px 0 0 0;
        background: #f7f7f7;
    }
    footer {
        flex: 1;
        border-top: 2px solid #d2d2d6;
        background: #fafafd;
    }
    .actions {
        display: flex;
        height: 164px;
    }
    .index {
        box-sizing: border-box;
        width: 294px;
        padding: 24px 0 0 26px;
    }
    .point {
        display: flex;
        align-items: center;
        height: 52px;
        gap: 13px;
        color: #ea3f39;
        font-size: 47px;
        letter-spacing: -0.8px;
        font-weight: 400;
        -webkit-text-stroke: 0.7px currentColor;
    }
    .idx-name {
        display: flex;
        height: 44px;
        line-height: 44px;
        color: #666;
        font-size: 35.500px;
    }
    .idx-name b {
        margin-left: 9px;
        color: #ea3f39;
        font-size: 32px;
        letter-spacing: 0.3px;
    }
    .act {
        position: relative;
        width: 197px;
        height: 150px;
        padding-bottom: 6px;
        font-size: 50px;
        color: #333;
        font-weight: 500;
    }
    .act::before {
        content: "";
        position: absolute;
        left: 0;
        top: 32px;
        width: 2px;
        height: 83px;
        background: #dcdce0;
    }
    .tip {
        position: absolute;
        left: 97px;
        top: 8px;
        width: 96px;
        height: 39px;
        border-radius: 20px 20px 20px 3px;
        background: #f53b49;
        color: #fff;
        font-size: 23.500px;
        line-height: 38px;
        font-weight: 400;
    }
    .menu {
        display: flex;
        flex-direction: column;
        align-items: center;
        height: auto;
        padding-top: 28px;
        color: #666;
        font-size: 32px;
        line-height: 50px;
        font-weight: 400;
    }
    .home {
        width: 360px;
        height: 12px;
        margin: 0 auto;
        border-radius: 6px;
        background: #7f7f7f;
    }
</style>
